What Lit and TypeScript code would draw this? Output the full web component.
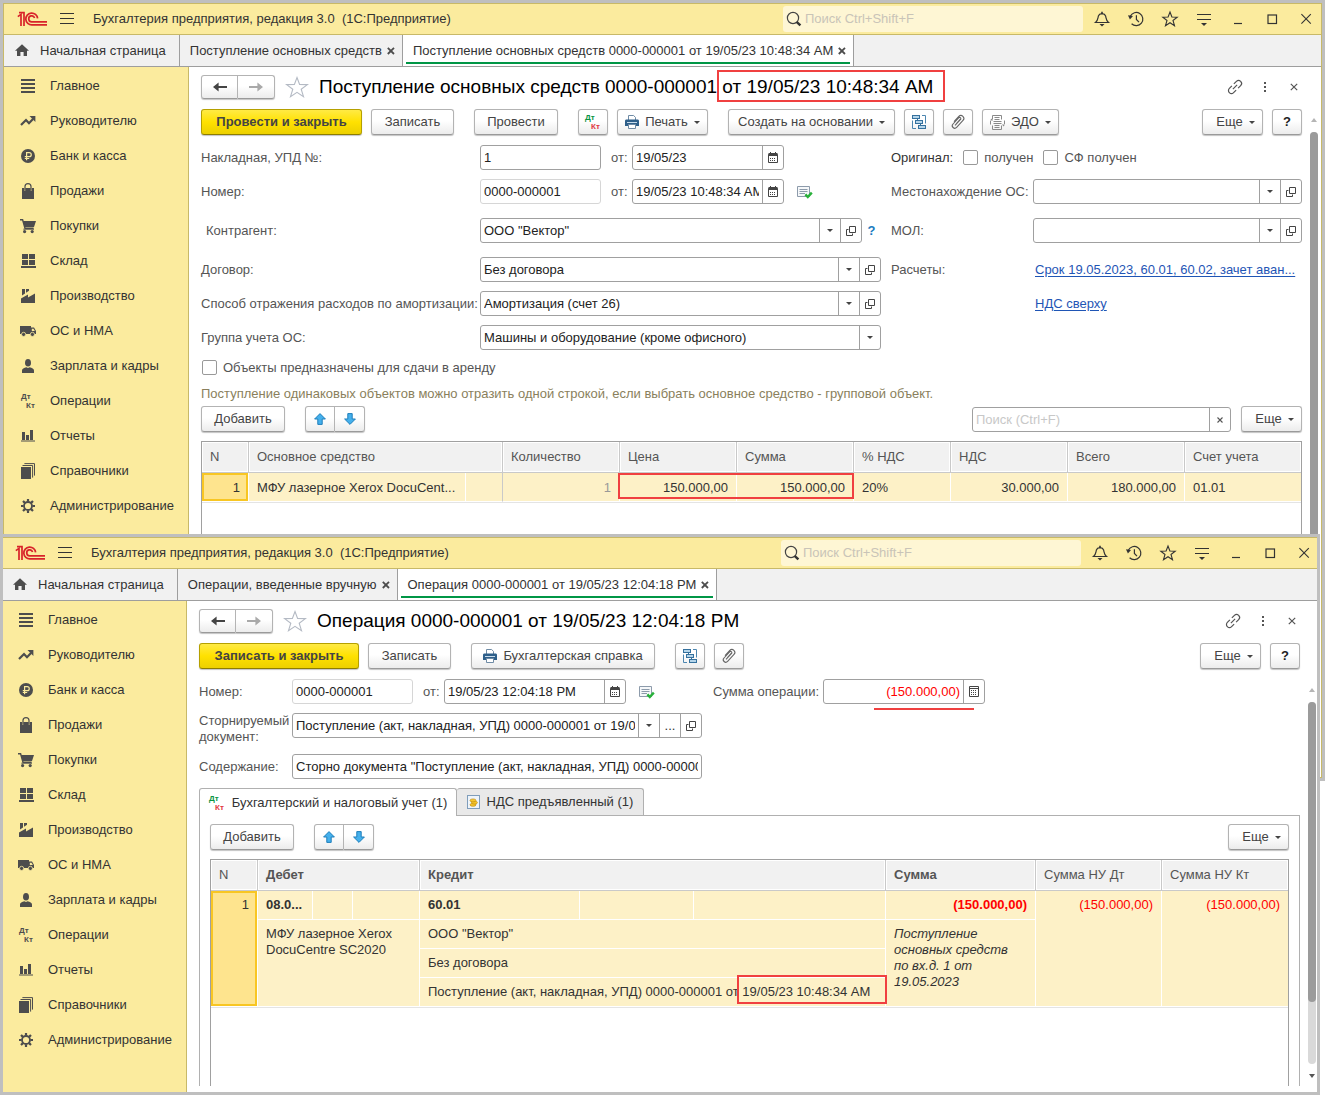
import { LitElement, html, svg, css, TemplateResult } from "lit";
import { customElement, property } from "lit/decorators.js";
import { classMap } from "lit/directives/class-map.js";

const base = css`
  *,
  *::before,
  *::after {
    box-sizing: border-box;
  }
  button,
  input,
  select {
    font: inherit;
    color: inherit;
    margin: 0;
  }
  button {
    padding: 0;
    border: 0;
    background: none;
    display: inline-flex;
    align-items: center;
    justify-content: center;
    white-space: nowrap;
  }
  svg {
    display: block;
    flex: none;
    overflow: visible;
  }
  a {
    color: inherit;
    text-decoration: none;
  }
`;

type Shape = { w: number; h: number; body: TemplateResult };

const D = "#4d4d4d";

const shapes: Record<string, Shape> = {
  logo: {
    w: 30,
    h: 16,
    body: svg`<g fill="none" stroke="#d8232a" stroke-width="1.7">
      <path d="M.8 5.6 L4 3.4 V15"/><path d="M2 1.7 H7 V15"/>
      <path d="M20.6 7.4 A5.9 5.9 0 1 0 15 13.9 H30"/>
      <path d="M17.6 6.9 A3 3 0 1 0 15 10.8 H30"/></g>`,
  },
  burger: { w: 14, h: 12, body: svg`<path d="M0 .5H14M0 5.5H14M0 10.5H14" stroke="#333" fill="none"/>` },
  lens: {
    w: 16,
    h: 16,
    body: svg`<circle cx="7" cy="7" r="5.6" fill="none" stroke="#444" stroke-width="1.2"/><path d="M10.6 10.8 L14.4 14.4" stroke="#333" stroke-width="2.4"/>`,
  },
  bell: {
    w: 16,
    h: 16,
    body: svg`<path d="M1.5 11.5 C4 9.5 3.8 7 4.4 5 C4.9 3.4 6 2.8 8 2.6 C10 2.8 11.1 3.4 11.6 5 C12.2 7 12 9.5 14.5 11.5 Z" fill="none" stroke="#333" stroke-width="1.2"/><path d="M8 .8V3" stroke="#333" stroke-width="1.6"/><path d="M5.5 13h5L8 15.4z" fill="#333"/>`,
  },
  history: {
    w: 16,
    h: 16,
    body: svg`<path d="M2.3 5.2 A6.6 6.6 0 1 1 3.6 12.8" fill="none" stroke="#333" stroke-width="1.2"/><path d="M0 4.2 L5 5 L1.9 8.6 Z" fill="#333"/><path d="M8.4 4.2V8.4L11 11.2" fill="none" stroke="#333" stroke-width="1.2"/>`,
  },
  star: {
    w: 16,
    h: 16,
    body: svg`<path d="M8 1 L9.9 6 L15.2 6.2 L11 9.5 L12.5 14.7 L8 11.7 L3.5 14.7 L5 9.5 L.8 6.2 L6.1 6 Z" fill="none" stroke="#333" stroke-width="1.1"/>`,
  },
  bigstar: {
    w: 24,
    h: 22,
    body: svg`<path d="M12 1.5 L14.6 8.4 L22.4 8.6 L16.2 13.2 L18.5 20.6 L12 16.3 L5.5 20.6 L7.8 13.2 L1.6 8.6 L9.4 8.4 Z" fill="#fff" stroke="#b4bac4" stroke-width="1.1"/>`,
  },
  settings: {
    w: 16,
    h: 16,
    body: svg`<path d="M1 3.5H15M1 8.5H15" stroke="#333"/><path d="M5 12h6L8 15z" fill="#333"/>`,
  },
  min: { w: 16, h: 16, body: svg`<path d="M4 12.5H12" stroke="#333" stroke-width="1.2"/>` },
  max: { w: 16, h: 16, body: svg`<rect x="4" y="4" width="8.5" height="8.5" fill="none" stroke="#333" stroke-width="1.2"/>` },
  close: { w: 16, h: 16, body: svg`<path d="M3.4 3.2L12.8 12.6M12.8 3.2L3.4 12.6" stroke="#333" stroke-width="1.1"/>` },
  home: {
    w: 14,
    h: 13,
    body: svg`<path d="M7 .2 L14 6.8 H12 V12 H8.6 V8 H5.4 V12 H2 V6.8 H0 Z" fill="${D}"/>`,
  },
  cross: { w: 8, h: 8, body: svg`<path d="M.8 .8L7 7M7 .8L.8 7" stroke="${D}" stroke-width="1.8"/>` },
  thincross: { w: 8, h: 8, body: svg`<path d="M.8 .8L7.2 7.2M7.2 .8L.8 7.2" stroke="#555" stroke-width="1.2"/>` },
  clear: { w: 6, h: 6, body: svg`<path d="M.5 .5L5.5 5.5M5.5 .5L.5 5.5" stroke="#555" stroke-width="1.1"/>` },
  list: { w: 14, h: 14, body: svg`<path d="M0 1H14M0 5H14M0 9H14M0 13H14" stroke="${D}" stroke-width="1.9"/>` },
  trend: {
    w: 16,
    h: 12,
    body: svg`<path d="M1 10 L6 5 L9 8.2 L13 4" fill="none" stroke="${D}" stroke-width="2.2"/><path d="M9.5 1 H15.4 V7 Z" fill="${D}"/>`,
  },
  ruble: {
    w: 14,
    h: 14,
    body: svg`<circle cx="7" cy="7" r="7" fill="${D}"/><path d="M5.6 11.2V3.6H8.2A2 2 0 0 1 8.2 7.7H3.8M3.8 9.5H8.2" fill="none" stroke="#fbeb9e" stroke-width="1.2"/>`,
  },
  bag: {
    w: 14,
    h: 16,
    body: svg`<path d="M1 5H3.2V7.6H4.4V5H9.6V7.6H10.8V5H13V16H1Z" fill="${D}"/><path d="M4 7V3.6A3 3 0 0 1 10 3.6V7" fill="none" stroke="${D}" stroke-width="1.2"/>`,
  },
  cart: {
    w: 16,
    h: 14,
    body: svg`<path d="M0 .8H2.6L5 9.2H13.6" fill="none" stroke="${D}" stroke-width="1.4"/><path d="M3 2H16L14 8H4.7Z" fill="${D}"/><path d="M3.4 10.2H14" stroke="${D}"/><circle cx="4.6" cy="12.6" r="1.6" fill="${D}"/><circle cx="12.2" cy="12.6" r="1.6" fill="${D}"/>`,
  },
  boxes: {
    w: 15,
    h: 14,
    body: svg`<path d="M1 0H7V5H1ZM8 0H14V5H8ZM1 6H7V11H1ZM8 6H14V11H8ZM0 12H15V14H0Z" fill="${D}"/>`,
  },
  factory: {
    w: 14,
    h: 14,
    body: svg`<path d="M0 14V9.4L7 5.4V8.6L14 4.6V14Z" fill="${D}"/><path d="M1 0H4V4.4L1 6.4ZM5 0H8V1.8L5 3.8Z" fill="${D}"/>`,
  },
  truck: {
    w: 16,
    h: 12,
    body: svg`<path d="M0 1H11V9H0Z" fill="${D}"/><path d="M11 2.6H14L16 6V9H11Z" fill="${D}"/><path d="M11.8 3.8H13.5L14.8 6H11.8Z" fill="#fbeb9e"/><circle cx="3.6" cy="9.4" r="2.1" fill="${D}" stroke="#fbeb9e" stroke-width=".8"/><circle cx="12.4" cy="9.4" r="2.1" fill="${D}" stroke="#fbeb9e" stroke-width=".8"/>`,
  },
  person: {
    w: 12,
    h: 14,
    body: svg`<ellipse cx="6" cy="3.8" rx="3" ry="3.8" fill="${D}"/><path d="M0 14V11.4C0 9.6 2 9 4.4 8.2L6 9 7.6 8.2C10 9 12 9.6 12 11.4V14Z" fill="${D}"/>`,
  },
  dtkt: {
    w: 14,
    h: 16,
    body: svg`<g font-family="Liberation Sans, Arial, sans-serif" font-size="8" font-weight="700" fill="${D}"><text x="0" y="6">Дт</text><text x="5" y="15">Кт</text></g>`,
  },
  dtktc: {
    w: 16,
    h: 16,
    body: svg`<g font-family="Liberation Sans, Arial, sans-serif" font-size="8" font-weight="700"><text x="0" y="6" fill="#0a9343">Дт</text><text x="6" y="15" fill="#e0393e">Кт</text></g>`,
  },
  chart: {
    w: 14,
    h: 12,
    body: svg`<path d="M1 2H4V10H1ZM5 5H8V10H5ZM9 0H12V10H9ZM0 10.6H14V11.6H0Z" fill="${D}"/>`,
  },
  books: {
    w: 14,
    h: 16,
    body: svg`<path d="M0 4H10V16H0Z" fill="${D}"/><path d="M1.5 2.5H11.6V14.6M3.4 .6H13.5V12.6" fill="none" stroke="${D}"/>`,
  },
  gear: {
    w: 14,
    h: 14,
    body: svg`<circle cx="7" cy="7" r="4" fill="none" stroke="${D}" stroke-width="1.8"/><path d="M7 0V2.6M7 11.4V14M0 7H2.6M11.4 7H14M2 2L3.9 3.9M10.1 10.1L12 12M12 2L10.1 3.9M3.9 10.1L2 12" stroke="${D}" stroke-width="2.2"/>`,
  },
  left: { w: 14, h: 10, body: svg`<path d="M0 5L5.6 .4V4H14V6H5.6V9.6Z" fill="#444"/>` },
  right: { w: 14, h: 10, body: svg`<path d="M14 5L8.4 .4V4H0V6H8.4V9.6Z" fill="#a9a9a9"/>` },
  link: {
    w: 16,
    h: 16,
    body: svg`<g fill="none" stroke="#555" stroke-width="1.2" transform="rotate(-45 8 8)"><path d="M6.6 5H3A3 3 0 0 0 3 11H6.6M9.4 5H13A3 3 0 0 1 13 11H9.4M5 8H11"/></g>`,
  },
  dots: { w: 4, h: 12, body: svg`<path d="M1 1H3V3H1ZM1 5H3V7H1ZM1 9H3V11H1Z" fill="#555"/>` },
  print: {
    w: 14,
    h: 14,
    body: svg`<path d="M3.5 5V.5H8.6L10.5 2.4V5" fill="#fff" stroke="#6f8ba5"/><path d="M0 6C0 5 .6 4.5 1.5 4.5H12.5C13.4 4.5 14 5 14 6V11H0Z" fill="#2e5f8a"/><path d="M2 7.5H12" stroke="#c8dcec"/><path d="M3.5 9.5H10.5V13.5H3.5Z" fill="#fff" stroke="#6f8ba5"/>`,
  },
  struct: {
    w: 14,
    h: 14,
    body: svg`<path d="M.5 5.5V13.5H4M10 .5H13.5V8.5" fill="none" stroke="#4d86b0"/><g fill="#b5d5ea" stroke="#35719e"><rect x=".5" y=".5" width="7" height="3"/><rect x="3.5" y="5.5" width="7" height="3"/><rect x="6.5" y="10.5" width="7" height="3"/></g><path d="M5.5 3.5V5.5M8.5 8.5V10.5" stroke="#35719e"/>`,
  },
  clip: {
    w: 14,
    h: 14,
    body: svg`<path d="M4 10.4L9.6 4.4A1.2 1.2 0 0 0 7.6 2.9L2 9A2.4 2.4 0 0 0 5.6 12.4L12 5.4A2.8 2.8 0 0 0 7.8 1.4L3 6.6M5.4 8.6L9.4 4.2" fill="none" stroke="#666" stroke-width="1.1"/>`,
  },
  edo: {
    w: 15,
    h: 15,
    body: svg`<g fill="none" stroke="#8a8a8a"><path d="M2.5 4.5V.5H11.5V4.5M2.5 10.5V14.5H11.5V10.5M4.5 2.5H9.5M4.5 4.5H9.5M3.5 6.5H11.5M3.5 8.5H11.5M4.5 10.5H9.5M4.5 12.5H9.5"/><path d="M.5 9.5V6M14.5 5.5V9"/></g><path d="M0 5.5L3 5.5L1.5 3.5ZM12 9.5L15 9.5L13.5 11.5Z" fill="#8a8a8a"/>`,
  },
  caret: { w: 6, h: 3, body: svg`<path d="M0 0H6L3 3Z" fill="#444"/>` },
  cal: {
    w: 10,
    h: 11,
    body: svg`<path d="M.5 2.5H9.5V10.5H.5Z" fill="#fff" stroke="#444"/><path d="M.5 1H9.5V4H.5Z" fill="#444"/><path d="M2.5 0V2M7.5 0V2" stroke="#444"/><path d="M2 6.5H8M2 8.5H8" stroke="#444" stroke-dasharray="1 1"/>`,
  },
  calc: {
    w: 10,
    h: 11,
    body: svg`<path d="M.5 .5H9.5V10.5H.5Z" fill="#fff" stroke="#444"/><path d="M1 2.5H9" stroke="#444"/><path d="M2 4.5H8M2 6.5H8M2 8.5H8" stroke="#444" stroke-dasharray="1 1"/>`,
  },
  open: {
    w: 10,
    h: 10,
    body: svg`<path d="M3.5 .5H9.5V6.5H3.5Z" fill="none" stroke="#444"/><path d="M2.5 3.5H.5V9.5H6.5V7.5" fill="none" stroke="#444"/>`,
  },
  posted: {
    w: 16,
    h: 13,
    body: svg`<path d="M.5 1.5H12.5V11.5H.5Z" fill="#f6f8fa" stroke="#8d9bab"/><path d="M2.5 4.5H10.5M2.5 6.5H10.5M2.5 8.5H8" stroke="#8d9bab"/><path d="M8.4 9.4L10.8 12L14.8 7.6" fill="none" stroke="#28b13a" stroke-width="2.4"/>`,
  },
  up: { w: 12, h: 12, body: svg`<path d="M6 .6L11.4 6H8.2V11.4H3.8V6H.6Z" fill="#45b0ec" stroke="#1f7fbb"/>` },
  down: { w: 12, h: 12, body: svg`<path d="M6 11.4L11.4 6H8.2V.6H3.8V6H.6Z" fill="#45b0ec" stroke="#1f7fbb"/>` },
  coins: {
    w: 13,
    h: 14,
    body: svg`<rect x=".5" y=".5" width="12" height="13" fill="#eef4fa" stroke="#7f9dbb"/><g fill="#f6c62c" stroke="#b98508" stroke-width=".6"><ellipse cx="6" cy="9.8" rx="3" ry="1.5"/><ellipse cx="7.4" cy="7.6" rx="3" ry="1.5"/><ellipse cx="6" cy="5.4" rx="3" ry="1.5"/></g>`,
  },
  scrollup: { w: 6, h: 4, body: svg`<path d="M0 4H6L3 0Z" fill="#b5b5b5"/>` },
  scrolldown: { w: 6, h: 4, body: svg`<path d="M0 0H6L3 4Z" fill="#555"/>` },
};

const icon = (name: string) => {
  const s = shapes[name];
  return html`<svg width=${s.w} height=${s.h} viewBox="0 0 ${s.w} ${s.h}" aria-hidden="true">${s.body}</svg>`;
};

const sections: [string, string][] = [
  ["list", "Главное"],
  ["trend", "Руководителю"],
  ["ruble", "Банк и касса"],
  ["bag", "Продажи"],
  ["cart", "Покупки"],
  ["boxes", "Склад"],
  ["factory", "Производство"],
  ["truck", "ОС и НМА"],
  ["person", "Зарплата и кадры"],
  ["dtkt", "Операции"],
  ["chart", "Отчеты"],
  ["books", "Справочники"],
  ["gear", "Администрирование"],
];

@customElement("app-window")
export class AppWindow extends LitElement {
  @property({ type: Array }) tabs: string[] = [];
  @property({ reflect: true }) layer = "back";

  static styles = [
    base,
    css`
      :host {
        --lead: 1px;
        --trail: 2px;
        --bar-top: 51px;
        display: flex;
        flex-direction: column;
        padding: 3px;
        background: #bfbfbf;
      }
      :host([layer="front"]) {
        --lead: 0px;
        --trail: 0px;
        --bar-top: 87px;
      }
      .frame {
        flex: 1;
        display: flex;
        flex-direction: column;
        min-width: 0;
        background: #fff;
        border: 1px solid #c8b968;
      }
      .front {
        border-width: 1px 0 0;
      }
      .titlebar {
        display: flex;
        align-items: center;
        height: 31px;
        padding: 0 calc(5px + var(--trail)) 0 calc(12px + var(--lead));
        background: #fbeb9e;
        border-bottom: 1px solid #c8b968;
      }
      .burger {
        margin: 0 19px 0 13px;
      }
      .name {
        white-space: pre;
        color: #333;
      }
      .search {
        display: flex;
        align-items: center;
        gap: 3px;
        width: 300px;
        height: 26px;
        margin: 0 11px 0 auto;
        padding: 0 3px;
        background: #fef6d4;
        border-radius: 3px;
      }
      .search input {
        flex: 1;
        min-width: 0;
        border: 0;
        padding: 0;
        background: none;
        outline: 0;
      }
      .search input::placeholder {
        color: #c9c4b8;
        opacity: 1;
      }
      .tools {
        display: flex;
        gap: 18px;
      }
      .tools button {
        width: 16px;
        height: 16px;
      }
      .tabs {
        display: flex;
        height: 32px;
        background: #f1f1f1;
        border-bottom: 1px solid #9e9e9e;
      }
      .tab {
        position: relative;
        display: flex;
        align-items: center;
        gap: 5px;
        padding: 0 7px 0 10px;
        border-right: 1px solid #9e9e9e;
        white-space: nowrap;
        color: #333;
      }
      .home {
        gap: 11px;
        padding: 0 13px 0 calc(10px + var(--lead));
      }
      .active {
        background: #fff;
      }
      .active::after {
        content: "";
        position: absolute;
        left: 3px;
        right: 3px;
        bottom: 2px;
        height: 2px;
        background: #009646;
      }
      .body {
        flex: 1;
        display: flex;
        min-height: 0;
      }
      nav {
        flex: none;
        width: calc(184px + var(--lead));
        padding: 1px 0 0 calc(15px + var(--lead));
        background: #fbeb9e;
        border-right: 1px solid #c8b968;
      }
      nav a {
        display: grid;
        grid-template-columns: 16px 1fr;
        align-items: center;
        gap: 14px;
        height: 35px;
        color: #333;
        white-space: nowrap;
      }
      nav svg {
        justify-self: center;
      }
      .content {
        flex: 1;
        min-width: 0;
        display: flex;
        flex-direction: column;
      }
      .bar {
        flex: none;
        width: 8px;
        margin: var(--bar-top) calc(1px + var(--trail)) 14px 8px;
        display: flex;
        flex-direction: column;
        align-items: center;
        gap: 10px;
      }
      .track {
        flex: 1;
        width: 8px;
        border-radius: 4px;
        background: #d9d9d9;
      }
      .thumb {
        height: 100%;
        border-radius: 4px;
        background: #9b9b9b;
      }
      .front .thumb {
        height: 83%;
      }
    `,
  ];

  render() {
    const last = this.tabs.length - 1;
    return html`
      <div class=${classMap({ frame: true, front: this.layer === "front" })}>
        <header class="titlebar">
          ${icon("logo")}
          <button class="burger" aria-label="Меню">${icon("burger")}</button>
          <span class="name">Бухгалтерия предприятия, редакция 3.0  (1С:Предприятие)</span>
          <label class="search">${icon("lens")}<input type="search" aria-label="Поиск" placeholder="Поиск Ctrl+Shift+F" /></label>
          <div class="tools">
            ${["bell", "history", "star", "settings", "min", "max", "close"].map(
              (n) => html`<button aria-label=${n}>${icon(n)}</button>`
            )}
          </div>
        </header>
        <div class="tabs">
          <a class="tab home" href="#home">${icon("home")}<span>Начальная страница</span></a>
          ${this.tabs.map(
            (t, i) => html`<div class=${classMap({ tab: true, active: i === last })}>
              <a href="#tab">${t}</a><button aria-label="Закрыть">${icon("cross")}</button>
            </div>`
          )}
        </div>
        <div class="body">
          <nav>${sections.map(([n, t]) => html`<a href="#section">${icon(n)}<span>${t}</span></a>`)}</nav>
          <div class="content"><slot></slot></div>
          <div class="bar" aria-hidden="true">
            ${icon("scrollup")}
            <div class="track"><div class="thumb"></div></div>
            ${icon("scrolldown")}
          </div>
        </div>
      </div>
    `;
  }
}

@customElement("app-root")
export class AppRoot extends LitElement {
  static styles = [
    base,
    css`
      :host {
        display: flex;
        flex-direction: column;
        min-height: 100vh;
        background: #fff;
        font: 13px/16px "Liberation Sans", Arial, sans-serif;
        color: #333;
      }
      .lower {
        position: relative;
        flex: 1;
        margin: -247px 5px 0 0;
      }
      .page {
        flex: 1;
        display: flex;
        flex-direction: column;
        padding: 8px 0 6px 12px;
      }
      .head {
        display: flex;
        align-items: center;
        height: 24px;
      }
      .btn {
        height: 26px;
        padding: 0 13px;
        gap: 6px;
        color: #444;
        border: 1px solid #b3b3b3;
        border-bottom-color: #9a9a9a;
        border-radius: 3px;
        background: linear-gradient(#fff 0%, #fff 45%, #ececec 100%);
        box-shadow: 0 1px 1px #c4c4c4;
      }
      .primary {
        font-weight: 700;
        border-color: #b5a000;
        border-bottom-color: #8d7d00;
        background: linear-gradient(#ffea45 0%, #ffe100 50%, #ecd000 100%);
      }
      .w161 {
        width: 161px;
      }
      .w160 {
        width: 160px;
      }
      .w83 {
        width: 83px;
      }
      .w84 {
        width: 84px;
      }
      .w91 {
        width: 91px;
      }
      .w77 {
        width: 77px;
      }
      .w167 {
        width: 167px;
      }
      .w184 {
        width: 184px;
      }
      .more {
        width: 61px;
        padding: 0 6px 0 12px;
      }
      .square {
        width: 30px;
        padding: 0;
      }
      .tight {
        padding: 0 6px;
      }
      .ask {
        font-weight: 700;
        color: #222;
      }
      .pair {
        display: flex;
      }
      .pair .btn {
        width: 30px;
        padding: 0;
      }
      .pair .btn:first-child {
        border-radius: 3px 0 0 3px;
      }
      .pair .btn:last-child {
        border-radius: 0 3px 3px 0;
        border-left: 0;
      }
      .pair.nav .btn {
        width: 37px;
        height: 24px;
      }
      .fav {
        margin: 0 10px 0 10px;
      }
      h1 {
        margin: 0;
        font-size: 19px;
        line-height: 24px;
        font-weight: 400;
        color: #000;
        white-space: nowrap;
      }
      .marked {
        position: relative;
      }
      .mark {
        position: absolute;
        border: 2px solid #f04040;
        pointer-events: none;
      }
      .mark.title {
        inset: -6px -12px -5px -5px;
      }
      .mark.sums {
        top: 0;
        left: -2px;
        width: calc(200% + 4px);
        height: 26px;
      }
      .mark.stamp {
        top: -9px;
        left: -5px;
        width: 150px;
        height: 29px;
      }
      .mark.line {
        top: 29px;
        right: 11px;
        width: 100px;
        border-width: 2px 0 0;
      }
      .headtools {
        display: flex;
        align-items: center;
        gap: 15px;
        margin-left: auto;
        padding-right: 1px;
      }
      .headtools button {
        min-width: 14px;
      }
      .tools {
        display: flex;
        gap: 9px;
        margin-top: 10px;
      }
      .gap {
        margin-left: 11px;
      }
      .push {
        margin-left: auto;
      }
      .form {
        display: grid;
        grid-template-columns: minmax(0, 680fr) minmax(0, 411fr);
        column-gap: 10px;
        margin-top: 10px;
      }
      .col {
        display: flex;
        flex-direction: column;
        gap: 9px;
      }
      .row {
        display: grid;
        grid-template-columns: 279px minmax(0, 1fr);
        align-items: center;
        min-height: 25px;
      }
      .right .row {
        grid-template-columns: 142px minmax(0, 1fr);
      }
      .brief {
        margin-top: 10px;
      }
      .brief .row {
        grid-template-columns: 93px minmax(0, 1fr);
      }
      .row.top {
        align-items: start;
      }
      .spaced {
        margin-top: 5px;
      }
      .indent {
        padding-left: 5px;
      }
      label,
      .caption {
        color: #555;
        white-space: nowrap;
      }
      .wrap {
        white-space: normal;
      }
      .strong {
        color: #333;
      }
      .line {
        display: flex;
        align-items: center;
      }
      .field {
        flex: 1;
        min-width: 0;
        display: flex;
        height: 25px;
        border: 1px solid #a0a0a0;
        border-radius: 3px;
        background: #fff;
      }
      .field input,
      .field select {
        flex: 1;
        min-width: 0;
        width: 0;
        border: 0;
        padding: 0 3px;
        background: none;
        outline: 0;
        appearance: none;
        color: #222;
      }
      .field input::placeholder {
        color: #c8c8c8;
        opacity: 1;
      }
      .field button,
      .field .drop {
        flex: none;
        display: flex;
        align-items: center;
        justify-content: center;
        width: 21px;
        border-left: 1px solid #a0a0a0;
      }
      .field.faint {
        border-color: #d6d6d6;
      }
      .f121 {
        flex: none;
        width: 121px;
      }
      .f152 {
        flex: none;
        width: 152px;
      }
      .f182 {
        flex: none;
        width: 182px;
      }
      .f162 {
        flex: none;
        width: 162px;
      }
      .f259 {
        flex: none;
        width: 259px;
      }
      .f410 {
        flex: none;
        width: 410px;
      }
      .of {
        width: 31px;
        padding-left: 10px;
      }
      .status {
        margin-left: 13px;
      }
      .tip {
        width: 19px;
        color: #1a7bbf;
        font-weight: 700;
      }
      .sum {
        margin-left: 58px;
        width: 110px;
      }
      .field input.red {
        color: #f00;
        text-align: right;
      }
      .check {
        appearance: none;
        flex: none;
        width: 15px;
        height: 15px;
        border: 1px solid #999;
        border-radius: 2px;
        background: #fff;
      }
      .checks {
        display: flex;
        align-items: center;
        height: 25px;
      }
      .checks label {
        margin-left: 6px;
      }
      .checks .check {
        margin-left: 10px;
      }
      .lease {
        display: flex;
        align-items: center;
        gap: 6px;
        height: 15px;
        margin: 10px 0 0 1px;
      }
      .hint {
        margin: 11px 0 0;
        color: #8a7f5c;
      }
      .link {
        margin-left: 2px;
        color: #1f55b5;
        text-decoration: underline;
        text-underline-offset: 2px;
        white-space: nowrap;
        overflow: hidden;
        text-overflow: ellipsis;
      }
      .rowtools {
        display: flex;
        margin-top: 4px;
      }
      .rowtools .pair {
        margin-left: 20px;
      }
      .rowtools .find {
        margin: 1px 10px 0 auto;
      }
      .box {
        flex: 1;
        min-height: 330px;
        margin-top: 9px;
        border: 1px solid #a0a0a0;
        border-bottom: 0;
      }
      .short {
        min-height: 160px;
      }
      table {
        width: 100%;
        table-layout: fixed;
        border-collapse: separate;
        border-spacing: 0;
      }
      th {
        height: 31px;
        padding: 0 8px;
        text-align: left;
        font-weight: 400;
        color: #555;
        background: #f1f1f1;
        border-right: 1px solid #c9c9c9;
        border-bottom: 1px solid #c9c9c9;
        box-shadow: inset 0 0 0 1px #fff;
        white-space: nowrap;
      }
      th.bold {
        font-weight: 700;
      }
      th:last-child {
        border-right: 0;
      }
      td {
        height: 29px;
        padding: 1px 8px 0;
        background: #fdf1c7;
        border-right: 1px solid #fff;
        border-bottom: 1px solid #fff;
        white-space: nowrap;
        color: #333;
      }
      td.end {
        border-right: 0;
      }
      .num {
        text-align: right;
      }
      td.grey {
        color: #999;
      }
      .cut {
        overflow: hidden;
        text-overflow: ellipsis;
      }
      td.ruled {
        border-right-color: #c9c9c9;
      }
      td.current {
        background: #fee48e;
        box-shadow: inset 0 0 0 2px #f8c623;
      }
      tbody.single {
        box-shadow: 0 1px 0 #e4e4e4;
      }
      .entry td {
        vertical-align: top;
        padding-top: 6px;
        line-height: 16px;
      }
      .entry td.wrap {
        white-space: normal;
      }
      .entry .bold {
        font-weight: 700;
      }
      .entry .red {
        color: #f00;
      }
      .entry td.note {
        font-style: italic;
        padding-right: 20px;
      }
      .booktabs {
        display: flex;
        margin-top: 9px;
      }
      .booktab {
        height: 27px;
        gap: 7px;
        padding: 0 9px;
        color: #333;
        border: 1px solid #b0b0b0;
        border-bottom: 0;
        border-radius: 3px 3px 0 0;
      }
      .booktab.on {
        position: relative;
        height: 28px;
        margin-bottom: -1px;
        background: #fff;
        width: 258px;
      }
      .booktab.off {
        width: 187px;
        border-left: 0;
        background: #e9e9e9;
      }
      .sheet {
        flex: 1;
        display: flex;
        flex-direction: column;
        padding: 4px 10px 0;
        border: 1px solid #b0b0b0;
        border-bottom: 0;
      }
    `,
  ];

  private more() {
    return html`<button class="btn more push">Еще ${icon("caret")}</button>`;
  }

  private head(title: unknown) {
    return html`<div class="head">
      <div class="pair nav">
        <button class="btn" aria-label="Назад">${icon("left")}</button>
        <button class="btn" aria-label="Вперед">${icon("right")}</button>
      </div>
      <button class="fav" aria-label="В избранное">${icon("bigstar")}</button>
      <h1>${title}</h1>
      <div class="headtools">
        <button aria-label="Ссылка">${icon("link")}</button>
        <button aria-label="Действия">${icon("dots")}</button>
        <button aria-label="Закрыть">${icon("thincross")}</button>
      </div>
    </div>`;
  }

  private field(id: string, value: string, size = "", buttons: string[] = [], red = false) {
    return html`<div class="field ${size}">
      <input id=${id} class=${red ? "red" : ""} type="text" .value=${value} />
      ${buttons.map((b) => html`<button aria-label=${b}>${b === "..." ? "..." : icon(b)}</button>`)}
    </div>`;
  }

  private arrows() {
    return html`<div class="pair">
      <button class="btn" aria-label="Выше">${icon("up")}</button>
      <button class="btn" aria-label="Ниже">${icon("down")}</button>
    </div>`;
  }

  private receipt() {
    return html`<div class="page">
      ${this.head(
        html`Поступление основных средств 0000-000001
          <span class="marked">от 19/05/23 10:48:34 AM<span class="mark title"></span></span>`
      )}
      <div class="tools">
        <button class="btn primary w161">Провести и закрыть</button>
        <button class="btn w83">Записать</button>
        <button class="btn w84 gap">Провести</button>
        <button class="btn square gap" aria-label="Дт Кт">${icon("dtktc")}</button>
        <button class="btn tight w91">${icon("print")} Печать ${icon("caret")}</button>
        <button class="btn tight w167 gap">Создать на основании ${icon("caret")}</button>
        <button class="btn square" aria-label="Структура">${icon("struct")}</button>
        <button class="btn square" aria-label="Файлы">${icon("clip")}</button>
        <button class="btn tight w77">${icon("edo")} ЭДО ${icon("caret")}</button>
        ${this.more()}
        <button class="btn square ask">?</button>
      </div>
      <div class="form">
        <div class="col">
          <div class="row">
            <label for="inv">Накладная, УПД №:</label>
            <div class="line">
              ${this.field("inv", "1", "f121")}
              <label class="of" for="invd">от:</label>
              ${this.field("invd", "19/05/23", "f152", ["cal"])}
            </div>
          </div>
          <div class="row">
            <label for="num">Номер:</label>
            <div class="line">
              ${this.field("num", "0000-000001", "f121 faint")}
              <label class="of" for="numd">от:</label>
              ${this.field("numd", "19/05/23 10:48:34 AM", "f152", ["cal"])}
              <span class="status">${icon("posted")}</span>
            </div>
          </div>
          <div class="row spaced">
            <label class="indent" for="party">Контрагент:</label>
            <div class="line">
              ${this.field("party", 'ООО "Вектор"', "", ["caret", "open"])}
              <button class="tip">?</button>
            </div>
          </div>
          <div class="row spaced">
            <label for="deal">Договор:</label>
            ${this.field("deal", "Без договора", "", ["caret", "open"])}
          </div>
          <div class="row">
            <label for="way">Способ отражения расходов по амортизации:</label>
            ${this.field("way", "Амортизация (счет 26)", "", ["caret", "open"])}
          </div>
          <div class="row">
            <label for="group">Группа учета ОС:</label>
            <div class="field">
              <select id="group">
                <option>Машины и оборудование (кроме офисного)</option>
              </select>
              <span class="drop">${icon("caret")}</span>
            </div>
          </div>
        </div>
        <div class="col right">
          <div class="checks">
            <span class="strong">Оригинал:</span>
            <input class="check" type="checkbox" id="got" /><label for="got">получен</label>
            <input class="check" type="checkbox" id="sf" /><label for="sf">СФ получен</label>
          </div>
          <div class="row">
            <label for="place">Местонахождение ОС:</label>
            ${this.field("place", "", "", ["caret", "open"])}
          </div>
          <div class="row spaced">
            <label for="mol">МОЛ:</label>
            ${this.field("mol", "", "", ["caret", "open"])}
          </div>
          <div class="row spaced">
            <span class="caption">Расчеты:</span>
            <a class="link" href="#terms">Срок 19.05.2023, 60.01, 60.02, зачет аван...</a>
          </div>
          <div class="row"><span></span><div class="line"><a class="link" href="#vat">НДС сверху</a></div></div>
        </div>
      </div>
      <div class="lease">
        <input class="check" type="checkbox" id="lease" />
        <label for="lease">Объекты предназначены для сдачи в аренду</label>
      </div>
      <p class="hint">
        Поступление одинаковых объектов можно отразить одной строкой, если выбрать основное средство - групповой объект.
      </p>
      <div class="rowtools">
        <button class="btn w84">Добавить</button>
        ${this.arrows()}
        <div class="field f259 find">
          <input type="text" aria-label="Поиск по таблице" placeholder="Поиск (Ctrl+F)" />
          <button aria-label="Очистить">${icon("clear")}</button>
        </div>
        <button class="btn more">Еще ${icon("caret")}</button>
      </div>
      <div class="box">
        <table>
          <colgroup>
            ${[47, 0, 37, 117, 117, 117, 97, 117, 117, 116].map((w) =>
              w ? html`<col style="width:${w}px" />` : html`<col />`
            )}
          </colgroup>
          <thead>
            <tr>
              <th>N</th>
              <th colspan="2">Основное средство</th>
              ${["Количество", "Цена", "Сумма", "% НДС", "НДС", "Всего", "Счет учета"].map((t) => html`<th>${t}</th>`)}
            </tr>
          </thead>
          <tbody class="single">
            <tr>
              <td class="num current">1</td>
              <td class="cut">МФУ лазерное Xerox DocuCent...</td>
              <td class="ruled"></td>
              <td class="num grey">1</td>
              <td class="num marked">150.000,00<span class="mark sums"></span></td>
              <td class="num">150.000,00</td>
              <td>20%</td>
              <td class="num">30.000,00</td>
              <td class="num">180.000,00</td>
              <td class="end">01.01</td>
            </tr>
          </tbody>
        </table>
      </div>
    </div>`;
  }

  private operation() {
    return html`<div class="page">
      ${this.head("Операция 0000-000001 от 19/05/23 12:04:18 PM")}
      <div class="tools">
        <button class="btn primary w160">Записать и закрыть</button>
        <button class="btn w83">Записать</button>
        <button class="btn tight w184 gap">${icon("print")} Бухгалтерская справка</button>
        <button class="btn square gap" aria-label="Структура">${icon("struct")}</button>
        <button class="btn square" aria-label="Файлы">${icon("clip")}</button>
        ${this.more()}
        <button class="btn square ask">?</button>
      </div>
      <div class="col brief">
        <div class="row">
          <label for="onum">Номер:</label>
          <div class="line">
            ${this.field("onum", "0000-000001", "f121 faint")}
            <label class="of" for="odate">от:</label>
            ${this.field("odate", "19/05/23 12:04:18 PM", "f182", ["cal"])}
            <span class="status">${icon("posted")}</span>
            <label class="sum" for="osum">Сумма операции:</label>
            <div class="marked">
              ${this.field("osum", "(150.000,00)", "f162", ["calc"], true)}<span class="mark line"></span>
            </div>
          </div>
        </div>
        <div class="row top">
          <label class="wrap" for="odoc">Сторнируемый документ:</label>
          ${this.field("odoc", "Поступление (акт, накладная, УПД) 0000-000001 от 19/05/23 10:48:34 AM", "f410", [
            "caret",
            "...",
            "open",
          ])}
        </div>
        <div class="row">
          <label for="otext">Содержание:</label>
          ${this.field("otext", 'Сторно документа "Поступление (акт, накладная, УПД) 0000-000001 от 19/05/23"', "f410")}
        </div>
      </div>
      <div class="booktabs">
        <button class="booktab on">${icon("dtktc")} Бухгалтерский и налоговый учет (1)</button>
        <button class="booktab off">${icon("coins")} НДС предъявленный (1)</button>
      </div>
      <div class="sheet">
        <div class="rowtools">
          <button class="btn w84">Добавить</button>
          ${this.arrows()} ${this.more()}
        </div>
        <div class="box short">
          <table>
            <colgroup>
              ${[47, 55, 40, 67, 160, 114, 0, 150, 126, 126].map((w) =>
                w ? html`<col style="width:${w}px" />` : html`<col />`
              )}
            </colgroup>
            <thead>
              <tr>
                <th>N</th>
                <th class="bold" colspan="3">Дебет</th>
                <th class="bold" colspan="3">Кредит</th>
                <th class="bold">Сумма</th>
                <th>Сумма НУ Дт</th>
                <th>Сумма НУ Кт</th>
              </tr>
            </thead>
            <tbody class="single entry">
              <tr>
                <td class="num current" rowspan="4">1</td>
                <td class="bold cut">08.0...</td>
                <td></td>
                <td></td>
                <td class="bold">60.01</td>
                <td></td>
                <td></td>
                <td class="bold num red">(150.000,00)</td>
                <td class="num red" rowspan="4">(150.000,00)</td>
                <td class="num red end" rowspan="4">(150.000,00)</td>
              </tr>
              <tr>
                <td class="wrap" colspan="3" rowspan="3">МФУ лазерное Xerox DocuCentre SC2020</td>
                <td colspan="3">ООО "Вектор"</td>
                <td class="wrap note" rowspan="3">Поступление основных средств по вх.д. 1 от 19.05.2023</td>
              </tr>
              <tr>
                <td colspan="3">Без договора</td>
              </tr>
              <tr>
                <td colspan="3">
                  Поступление (акт, накладная, УПД) 0000-000001 от
                  <span class="marked">19/05/23 10:48:34 AM<span class="mark stamp"></span></span>
                </td>
              </tr>
            </tbody>
          </table>
        </div>
      </div>
    </div>`;
  }

  render() {
    return html`
      <app-window
        layer="back"
        .tabs=${["Поступление основных средств", "Поступление основных средств 0000-000001 от 19/05/23 10:48:34 AM"]}
        >${this.receipt()}</app-window
      >
      <app-window
        class="lower"
        layer="front"
        .tabs=${["Операции, введенные вручную", "Операция 0000-000001 от 19/05/23 12:04:18 PM"]}
        >${this.operation()}</app-window
      >
    `;
  }
}
